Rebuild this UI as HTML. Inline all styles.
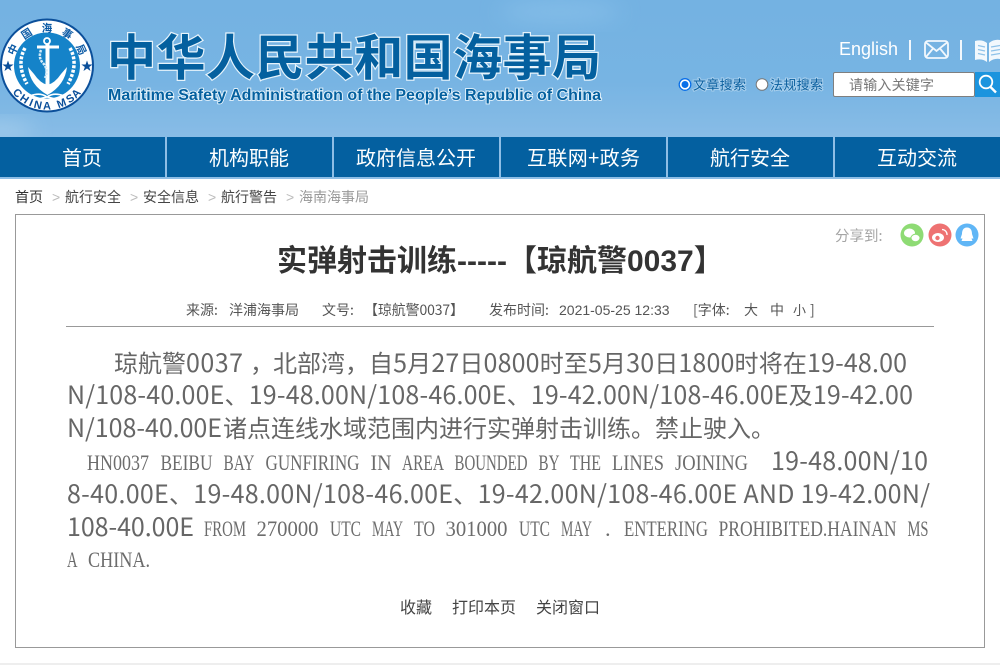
<!DOCTYPE html>
<html lang="zh-CN"><head><meta charset="utf-8"><title>实弹射击训练-----【琼航警0037】</title>
<style>
html,body{margin:0;padding:0;background:#fff;width:1000px;height:665px;overflow:hidden}
svg{display:block}
text{font-family:"Noto Sans CJK SC","Liberation Sans",sans-serif}
.b{font-size:24px;fill:#666}
.l{font-size:25px}
.m{font-family:"Liberation Serif",serif;font-size:22.500px;fill:#6c6c6c}
.n{font-size:20px;fill:#fff;text-anchor:middle}
.c{font-size:14px;fill:#444}
.g{font-family:"Liberation Sans",sans-serif;font-size:14px;fill:#bbb}
.t{font-size:14px;fill:#555}
.f{font-size:16px;fill:#444}
.r{font-size:13px;fill:#0a5f9e;stroke:#fff;stroke-width:2px;paint-order:stroke;stroke-opacity:.35}
.lt{font-size:10.500px;font-weight:700;fill:#0b5aa5;text-anchor:middle}
.la{font-family:"Liberation Sans",sans-serif;font-size:11px;font-weight:700;fill:#0b4f9a;text-anchor:middle}
.ti{font-family:"Liberation Sans","Noto Sans CJK SC",sans-serif;font-size:30px;font-weight:700;fill:#333}
</style></head><body>
<svg width="1000" height="665" viewBox="0 0 1000 665" xmlns="http://www.w3.org/2000/svg">
<defs>
<linearGradient id="hg" x1="0" y1="0" x2="0" y2="1"><stop offset="0" stop-color="#74b2e2"/><stop offset=".6" stop-color="#77b4e3"/><stop offset="1" stop-color="#88bce6"/></linearGradient>
<filter id="bl" x="-50%" y="-50%" width="200%" height="200%"><feGaussianBlur stdDeviation="10"/></filter>
</defs>

<!-- header -->
<rect width="1000" height="137" fill="url(#hg)"/>
<ellipse cx="0" cy="130" rx="35" ry="8" fill="#bcdcf2" opacity=".55" filter="url(#bl)"/>
<ellipse cx="560" cy="12" rx="60" ry="10" fill="#84bde8" filter="url(#bl)"/>

<!-- logo -->
<circle cx="47" cy="65.500" r="47" fill="#0b4f9a"/>
<circle cx="47" cy="65.500" r="45" fill="#fff"/>
<circle cx="47" cy="65.500" r="33" fill="#1583c9"/>
<text class="lt" x="47" y="31.500" transform="rotate(-65 47 65.500)">中</text>
<text class="lt" x="47" y="31.500" transform="rotate(-32.500 47 65.500)">国</text>
<text class="lt" x="47" y="31.500">海</text>
<text class="lt" x="47" y="31.500" transform="rotate(32.500 47 65.500)">事</text>
<text class="lt" x="47" y="31.500" transform="rotate(65 47 65.500)">局</text>
<text class="la" x="47" y="109.500" transform="rotate(47 47 65.500)">C</text>
<text class="la" x="47" y="109.500" transform="rotate(34 47 65.500)">H</text>
<text class="la" x="47" y="109.500" transform="rotate(23 47 65.500)">I</text>
<text class="la" x="47" y="109.500" transform="rotate(13 47 65.500)">N</text>
<text class="la" x="47" y="109.500" transform="rotate(0 47 65.500)">A</text>
<text class="la" x="47" y="109.500" transform="rotate(-21 47 65.500)">M</text>
<text class="la" x="47" y="109.500" transform="rotate(-35 47 65.500)">S</text>
<text class="la" x="47" y="109.500" transform="rotate(-46 47 65.500)">A</text>
<path d="M8 60.500l1.400 4h4.200l-3.400 2.500 1.300 4-3.500-2.500-3.500 2.500 1.300-4-3.400-2.500h4.200zM87 60.500l1.400 4h4.200l-3.400 2.500 1.300 4-3.500-2.500-3.500 2.500 1.300-4-3.400-2.500h4.200z" fill="#0b4f9a"/>
<!-- anchor -->
<g fill="none" stroke="#fff">
<circle cx="47" cy="41" r="3" stroke-width="1.800"/>
<path d="M37 47H59" stroke-width="3"/>
<path d="M47.500 44V92" stroke-width="4"/>
<path d="M41 50Q38 58 43 63Q49 70 45 78" stroke="#d4ebf8" stroke-width="2.500" stroke-dasharray="2.500 1"/>
<path d="M25 48Q16 64 27 84M70 48Q79 64 68 84" stroke-width="3.500" stroke-dasharray="3 1.500"/>
<path d="M30 96Q40 92 47 97Q54 92 64 96M33 101Q41 98 47 97Q53 98 61 101" stroke-width="1.600"/>
</g>
<path d="M28 67Q30 85 47.500 95Q65 85 67 67L61 74Q55 83 47.500 85Q40 83 34 74Z" fill="#fff"/>

<!-- site title -->
<text x="107" y="75" font-size="49" font-weight="700" fill="#04609f" stroke="#e6f3fb" stroke-width="2.400" paint-order="stroke" textLength="494" lengthAdjust="spacing">中华人民共和国海事局</text>
<text x="108" y="100" style="font-family:'Liberation Sans',sans-serif" font-size="15.500" font-weight="700" fill="#04609f" stroke="#e6f3fb" stroke-width="1.800" paint-order="stroke" textLength="493" lengthAdjust="spacingAndGlyphs">Maritime Safety Administration of the People’s Republic of China</text>

<!-- top right -->
<text x="839" y="55" style="font-family:'Liberation Sans',sans-serif" font-size="18" fill="#fff" textLength="59">English</text>
<rect x="909" y="40" width="2" height="20" fill="#f2f8fd"/>
<rect x="960" y="40" width="2" height="20" fill="#f2f8fd"/>
<g fill="none" stroke="#f2f8fd" stroke-width="1.800">
<rect x="925" y="41" width="23" height="17" rx="3"/>
<path d="M926 42.500L936.500 51 947 42.500M926 57L933 48.500M947 57L940 48.500"/>
</g>
<path d="M975 41Q982 39 987 43V62Q982 58 975 60ZM989 43Q994 39 1000 40V59Q994 58 989 62Z" fill="#f2f8fd"/>
<path d="M978 45.500l7 1.500M978 49.500l7 1.500M978 53.500l7 1.500M991 47l9-1.500M991 51l9-1.500M991 55l9-1.500" stroke="#8fc2e9" stroke-width="1.200"/>

<!-- search -->
<circle cx="685" cy="84.500" r="5.800" fill="#fff" stroke="#0a6fe8" stroke-width="1.300"/>
<circle cx="685" cy="84.500" r="3.500" fill="#0a6fe8"/>
<text x="693" y="89.500" class="r" textLength="53">文章搜索</text>
<circle cx="762" cy="84.500" r="5.800" fill="#fff" stroke="#777" stroke-width="1"/>
<text x="770" y="89.500" class="r" textLength="53">法规搜索</text>
<rect x="833.500" y="72.500" width="141" height="24" rx="1.500" fill="#fff" stroke="#7f7f7f"/>
<text x="849" y="90" font-size="14" fill="#777" textLength="85">请输入关键字</text>
<rect x="975" y="72" width="25" height="25" fill="#1b94de"/>
<circle cx="986" cy="82" r="6.300" fill="none" stroke="#fff" stroke-width="1.800"/>
<path d="M990.500 87L996 92.500" stroke="#fff" stroke-width="2.400"/>

<!-- nav -->
<rect y="137" width="1000" height="40" fill="#0460a0"/>
<rect y="177" width="1000" height="2" fill="#8ebee6"/>
<g fill="#8ebee6"><rect x="165" y="137" width="2" height="40"/><rect x="332" y="137" width="2" height="40"/><rect x="499" y="137" width="2" height="40"/><rect x="666" y="137" width="2" height="40"/><rect x="833" y="137" width="2" height="40"/></g>
<text x="82" y="165" class="n">首页</text>
<text x="249" y="165" class="n">机构职能</text>
<text x="416" y="165" class="n">政府信息公开</text>
<text x="527" y="165" font-size="20" fill="#fff" textLength="113">互联网+政务</text>
<text x="750" y="165" class="n">航行安全</text>
<text x="917" y="165" class="n">互动交流</text>

<!-- breadcrumb -->
<text x="15" y="202" class="c" style="fill:#333">首页</text>
<text x="52" y="202" class="g">&gt;</text>
<text x="65" y="202" class="c">航行安全</text>
<text x="130" y="202" class="g">&gt;</text>
<text x="143" y="202" class="c">安全信息</text>
<text x="208" y="202" class="g">&gt;</text>
<text x="221" y="202" class="c">航行警告</text>
<text x="286" y="202" class="g">&gt;</text>
<text x="299" y="202" class="c" style="fill:#999">海南海事局</text>

<!-- card -->
<rect x="15.500" y="214.500" width="969" height="433" fill="#fff" stroke="#999"/>
<rect x="15" y="647" width="970" height="1" fill="#999"/>

<!-- share -->
<text x="835" y="241" font-size="14.500" fill="#a5a5a5">分享到:</text>
<circle cx="912" cy="235" r="11.500" fill="#8edb74"/>
<ellipse cx="909.500" cy="233" rx="5.500" ry="4.500" fill="#fff"/>
<ellipse cx="915.500" cy="238" rx="4.500" ry="3.700" fill="#fff" stroke="#8edb74"/>
<circle cx="940" cy="235" r="11.500" fill="#ee7272"/>
<ellipse cx="938" cy="237.500" rx="6" ry="4.500" fill="#fff"/>
<circle cx="937.500" cy="238" r="2.200" fill="#ee7272"/>
<path d="M942 229.500A5 5 0 0 1 947 235" fill="none" stroke="#fff" stroke-width="1.300"/>
<circle cx="967" cy="235" r="11.500" fill="#60b6f6"/>
<path d="M967 227.500C963 227.500 962 231 962 234L960.500 238.500 962.500 238.500 961.500 241H972.500L971.500 238.500 973.500 238.500 972 234C972 231 971 227.500 967 227.500Z" fill="#fff"/>

<!-- title -->
<text x="277" y="271" class="ti">实弹射击训练-----【琼航警0037】</text>

<!-- meta -->
<text x="186" y="315" class="t">来源:</text>
<text x="229" y="315" class="t">洋浦海事局</text>
<text x="322" y="315" class="t">文号:</text>
<text x="364" y="315" class="t" textLength="100">【琼航警0037】</text>
<text x="489" y="315" class="t">发布时间:</text>
<text x="559" y="315" class="t" style="font-family:'Liberation Sans',sans-serif">2021-05-25 12:33</text>
<text x="693" y="315" class="t">[字体:</text>
<text x="744" y="315" class="t">大</text>
<text x="770" y="315" class="t">中</text>
<text x="793" y="315" class="t" style="font-size:13px">小</text>
<text x="810" y="315" class="t">]</text>
<rect x="66" y="326" width="868" height="1" fill="#999"/>

<!-- body -->
<text x="114" y="372" class="b">琼航警</text>
<text x="186" y="372" class="b l" textLength="57">0037</text>
<text x="250" y="372" class="b">，</text>
<text x="273" y="372" class="b">北部湾，</text>
<text x="369" y="372" class="b" textLength="538">自<tspan class="l">5</tspan>月<tspan class="l">27</tspan>日<tspan class="l">0800</tspan>时至<tspan class="l">5</tspan>月<tspan class="l">30</tspan>日<tspan class="l">1800</tspan>时将在<tspan class="l">19-48.00</tspan></text>
<text x="67" y="404" class="b" textLength="846"><tspan class="l">N/108-40.00E</tspan>、<tspan class="l">19-48.00N/108-46.00E</tspan>、<tspan class="l">19-42.00N/108-46.00E</tspan>及<tspan class="l">19-42.00</tspan></text>
<text x="67" y="437" class="b l" textLength="155">N/108-40.00E</text>
<text x="223" y="437" class="b">诸点连线水域范围内进行实弹射击训练。禁止驶入。</text>

<g class="m">
<text class="m" y="470" x="87" textLength="62" lengthAdjust="spacingAndGlyphs">HN0037</text>
<text class="m" y="470" x="160.500" textLength="52" lengthAdjust="spacingAndGlyphs">BEIBU</text>
<text class="m" y="470" x="223.500" textLength="31" lengthAdjust="spacingAndGlyphs">BAY</text>
<text class="m" y="470" x="265.500" textLength="94" lengthAdjust="spacingAndGlyphs">GUNFIRING</text>
<text class="m" y="470" x="370.500" textLength="21" lengthAdjust="spacingAndGlyphs">IN</text>
<text class="m" y="470" x="402" textLength="42" lengthAdjust="spacingAndGlyphs">AREA</text>
<text class="m" y="470" x="454.500" textLength="73" lengthAdjust="spacingAndGlyphs">BOUNDED</text>
<text class="m" y="470" x="538.500" textLength="21" lengthAdjust="spacingAndGlyphs">BY</text>
<text class="m" y="470" x="570" textLength="31" lengthAdjust="spacingAndGlyphs">THE</text>
<text class="m" y="470" x="612" textLength="52" lengthAdjust="spacingAndGlyphs">LINES</text>
<text class="m" y="470" x="675" textLength="73" lengthAdjust="spacingAndGlyphs">JOINING</text>

<text class="m" y="536" x="204" textLength="42" lengthAdjust="spacingAndGlyphs">FROM</text>
<text class="m" y="536" x="256.500" textLength="62" lengthAdjust="spacingAndGlyphs">270000</text>
<text class="m" y="536" x="330" textLength="31" lengthAdjust="spacingAndGlyphs">UTC</text>
<text class="m" y="536" x="372" textLength="31" lengthAdjust="spacingAndGlyphs">MAY</text>
<text class="m" y="536" x="414" textLength="21" lengthAdjust="spacingAndGlyphs">TO</text>
<text class="m" y="536" x="445.500" textLength="62" lengthAdjust="spacingAndGlyphs">301000</text>
<text class="m" y="536" x="519" textLength="31" lengthAdjust="spacingAndGlyphs">UTC</text>
<text class="m" y="536" x="561" textLength="31" lengthAdjust="spacingAndGlyphs">MAY</text>
<text class="m" y="536" x="605">.</text>
<text class="m" y="536" x="624" textLength="84" lengthAdjust="spacingAndGlyphs">ENTERING</text>
<text class="m" y="536" x="718.500" textLength="178" lengthAdjust="spacingAndGlyphs">PROHIBITED.HAINAN</text>
<text class="m" y="536" x="907.500" textLength="21" lengthAdjust="spacingAndGlyphs">MS</text>

<text class="m" y="567" x="67" textLength="10.500" lengthAdjust="spacingAndGlyphs">A</text>
<text class="m" y="567" x="88" textLength="62" lengthAdjust="spacingAndGlyphs">CHINA.</text>
</g>

<text x="771" y="470" class="b l" textLength="157">19-48.00N/10</text>
<text x="67" y="503" class="b" textLength="863"><tspan class="l">8-40.00E</tspan>、<tspan class="l">19-48.00N/108-46.00E</tspan>、<tspan class="l">19-42.00N/108-46.00E AND 19-42.00N/</tspan></text>
<text x="67" y="536" class="b l" textLength="127">108-40.00E</text>

<!-- links -->
<text x="400" y="613" class="f">收藏</text>
<text x="452" y="613" class="f">打印本页</text>
<text x="536" y="613" class="f">关闭窗口</text>

<rect y="663" width="1000" height="2" fill="#eee"/>
</svg>
</body></html>
